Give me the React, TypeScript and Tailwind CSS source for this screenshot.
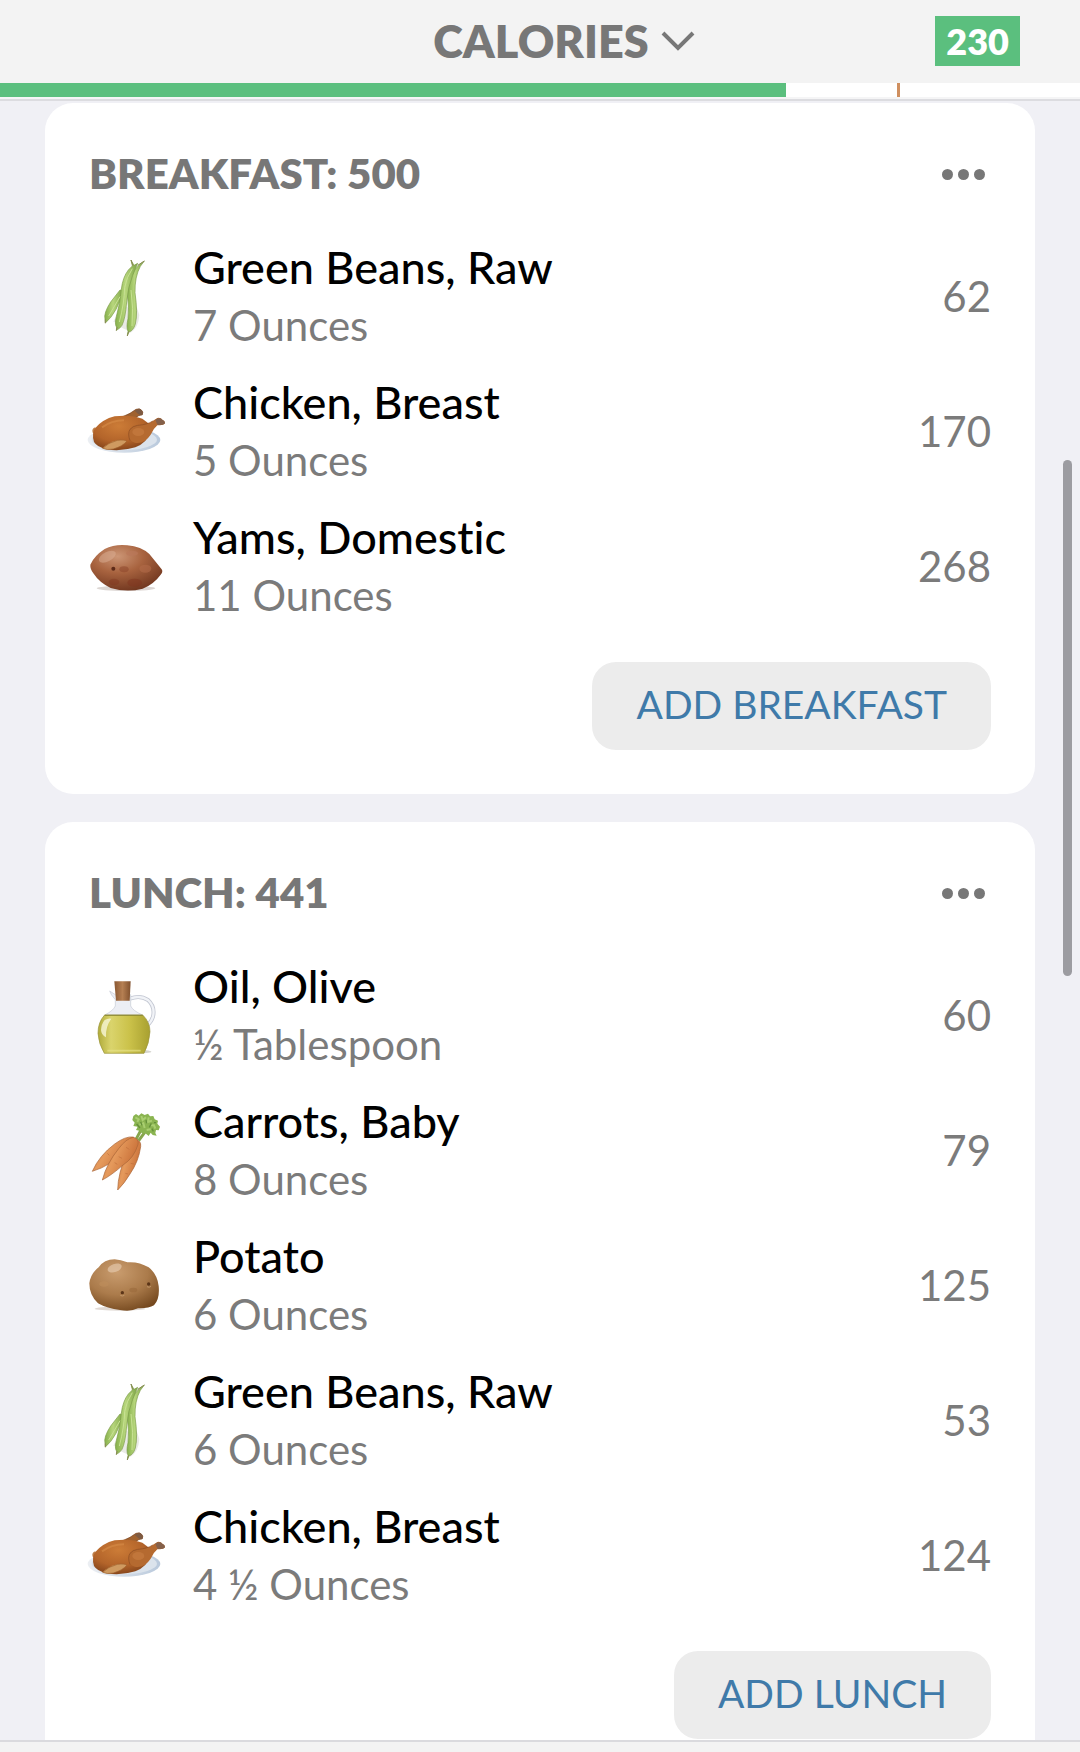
type Food = {
  name: string;
  amount: string;
  calories: number;
  icon: () => React.ReactNode;
};

function GreenBeans() {
  return (
    <svg viewBox="45 51 240 240" className="size-full" aria-hidden="true">
      <defs>
        <linearGradient id="bean" x1="0" x2="1">
          <stop offset="0" stopColor="#86b04c" />
          <stop offset="0.45" stopColor="#b7d67c" />
          <stop offset="1" stopColor="#7da545" />
        </linearGradient>
      </defs>
      <path d="M130 246 Q142 244 152 262 Q172 270 182 278 Q206 262 208 225 L200 200 L150 200 Z" fill="#e9eae6" />
      <path d="M106 249 L105 238 Q100 220 122 186 L150 150 L160 152 Q152 182 138 208 Q124 234 106 249 Z" fill="url(#bean)" stroke="#7b9c48" strokeWidth="2" />
      <path d="M172 286 L174 274 Q168 262 174 236 Q178 205 172 164 Q168 120 190 94 L208 74 L223 63 L211 79 Q194 110 195 158 Q204 220 196 252 Q190 272 177 276 Z" fill="url(#bean)" stroke="#7b9c48" strokeWidth="2" />
      <path d="M139 271 L140 262 Q133 252 139 230 Q150 192 154 148 Q158 112 175 90 L187 78 L183 60 L192 76 L203 70 Q196 88 188 106 Q174 140 170 186 Q166 236 156 256 Q150 266 139 271 Z" fill="url(#bean)" stroke="#7b9c48" strokeWidth="2" />
      <path d="M148 246 Q163 190 164 142 Q170 110 187 86 M186 258 Q191 205 183 150 M116 228 Q134 198 150 170" fill="none" stroke="#c8e193" strokeWidth="3" />
      <path d="M183 60 L189 77 M223 63 L203 76 M106 238 L106 250 M141 261 L139 272 M176 274 L172 288" fill="none" stroke="#8a8a55" strokeWidth="3" />
    </svg>
  );
}

function Chicken() {
  return (
    <svg viewBox="45 36 240 240" className="size-full" aria-hidden="true">
      <defs>
        <linearGradient id="plate" x1="0" x2="1">
          <stop offset="0" stopColor="#eceff3" />
          <stop offset="1" stopColor="#b9c9dc" />
        </linearGradient>
        <radialGradient id="roast" cx="0.45" cy="0.3" r="0.75">
          <stop offset="0" stopColor="#cc7c37" />
          <stop offset="0.6" stopColor="#b3642a" />
          <stop offset="1" stopColor="#7e4019" />
        </radialGradient>
      </defs>
      <ellipse cx="162" cy="180" rx="109" ry="38" fill="url(#plate)" />
      <ellipse cx="163" cy="179" rx="98" ry="31" fill="#dbe3ec" />
      <path d="M158 110 Q182 101 198 88 Q210 84 214 90 Q221 96 217 104 L206 107 Q194 112 188 124 Z" fill="#a0622f" stroke="#7a4420" strokeWidth="2" />
      <path d="M194 92 Q208 83 214 90 Q222 98 216 106 Q206 106 202 100 Z" fill="#7d5a42" />
      <path d="M76 142 Q64 146 68 158 L78 162 Z" fill="#bf804a" />
      <path d="M72 186 Q64 160 76 144 Q98 118 134 109 Q182 103 217 116 L237 131 L240 156 Q232 188 196 202 Q150 216 110 208 Q82 202 72 186 Z" fill="url(#roast)" />
      <path d="M176 172 Q172 142 203 136 Q233 134 248 123 L262 114 Q272 112 277 119 Q287 123 284 131 Q278 136 262 136 Q250 146 242 164 Q222 194 194 188 Q180 184 176 172 Z" fill="#b56a30" />
      <path d="M180 182 Q172 160 180 148 Q188 138 203 136 Q233 134 248 123" fill="none" stroke="#8b4b21" strokeWidth="2" />
      <path d="M256 119 Q270 111 277 119 Q287 123 284 131 Q276 137 262 134 Z" fill="#84604a" />
      <ellipse cx="205" cy="156" rx="18" ry="12" fill="#c67c40" opacity="0.7" />
      <path d="M98 205 Q114 188 142 181 Q164 178 170 184 Q160 198 130 207 Q110 211 98 205 Z" fill="#cf9a60" stroke="#a0642f" strokeWidth="2" />
      <path d="M96 142 Q124 122 162 121" stroke="#dc924b" strokeWidth="6" fill="none" opacity="0.5" />
    </svg>
  );
}

function Yam() {
  return (
    <svg viewBox="45 441 240 240" className="size-full" aria-hidden="true">
      <defs>
        <radialGradient id="yam" cx="0.38" cy="0.25" r="0.8">
          <stop offset="0" stopColor="#cc9676" />
          <stop offset="0.45" stopColor="#a8633f" />
          <stop offset="1" stopColor="#6f351e" />
        </radialGradient>
      </defs>
      <ellipse cx="168" cy="625" rx="88" ry="8" fill="#dcd6d3" />
      <path d="M61 554 Q72 528 104 507 Q134 492 172 496 Q214 500 238 522 Q256 544 275 568 Q280 576 272 584 Q252 612 218 626 Q170 638 122 624 Q88 608 70 580 Q60 566 61 554 Z" fill="url(#yam)" />
      <ellipse cx="112" cy="530" rx="28" ry="14" fill="#dcb096" opacity="0.5" transform="rotate(-28 112 530)" />
      <circle cx="130" cy="566" r="6" fill="#5d2a18" />
      <ellipse cx="162" cy="568" rx="14" ry="9" fill="#8a4228" opacity="0.5" />
      <ellipse cx="194" cy="608" rx="22" ry="12" fill="#80341e" opacity="0.5" />
      <ellipse cx="132" cy="606" rx="16" ry="10" fill="#80341e" opacity="0.4" />
      <ellipse cx="186" cy="520" rx="18" ry="8" fill="#b9775a" opacity="0.7" />
      <ellipse cx="226" cy="566" rx="18" ry="12" fill="#b26a49" opacity="0.6" />
    </svg>
  );
}

function OliveOil() {
  return (
    <svg viewBox="45 48 240 240" className="size-full" aria-hidden="true">
      <defs>
        <linearGradient id="oil" x1="0" x2="1">
          <stop offset="0" stopColor="#b0ab3a" />
          <stop offset="0.25" stopColor="#dad46c" />
          <stop offset="0.6" stopColor="#cbc24a" />
          <stop offset="1" stopColor="#a8a030" />
        </linearGradient>
        <linearGradient id="cork" x1="0" x2="1">
          <stop offset="0" stopColor="#8a5833" />
          <stop offset="0.5" stopColor="#b57f52" />
          <stop offset="1" stopColor="#80502d" />
        </linearGradient>
      </defs>
      <ellipse cx="190" cy="275" rx="54" ry="6" fill="#d5d5ce" />
      <path d="M180 116 Q210 104 234 120 Q256 140 249 170 Q244 186 233 194" fill="none" stroke="#c3c7d2" strokeWidth="12" />
      <path d="M180 116 Q210 104 234 120 Q256 140 249 170 Q244 186 233 194" fill="none" stroke="#f1f3f7" strokeWidth="7" />
      <path d="M136 104 L119 93 Q122 104 136 119 L136 138 Q130 152 104 165 L218 165 Q188 152 182 138 L182 104 Z" fill="#eceef4" stroke="#c6cad4" strokeWidth="2" />
      <path d="M133 64 L182 64 L179 122 L138 122 Z" fill="url(#cork)" />
      <path d="M104 165 L218 165 Q240 186 240 215 Q238 250 222 280 L103 280 Q86 252 84 220 Q84 186 104 165 Z" fill="url(#oil)" stroke="#989338" strokeWidth="2" />
      <path d="M104 166 L218 166" stroke="#8d8a35" strokeWidth="3" />
      <path d="M104 180 Q114 174 124 176 Q106 200 108 232 Q94 226 93 210 Q94 192 104 180 Z" fill="#f4f3cf" opacity="0.85" />
      <path d="M112 272 L212 272" stroke="#e6e287" strokeWidth="5" opacity="0.7" />
    </svg>
  );
}

function Carrots() {
  return (
    <svg viewBox="45 453 240 240" className="size-full" aria-hidden="true">
      <defs>
        <linearGradient id="carrot" x1="0" x2="1" y2="0.5">
          <stop offset="0" stopColor="#cb7640" />
          <stop offset="0.45" stopColor="#e59a5c" />
          <stop offset="1" stopColor="#c56a33" />
        </linearGradient>
      </defs>
      <path d="M198 538 L214 508 M206 542 L228 512" stroke="#86a64c" strokeWidth="9" fill="none" />
      <path
        d="M190 468 L198 462 L206 467 L214 460 L224 465 L234 461 L240 469 L250 468 L254 478 L264 482 L262 491 L270 500 L266 511 L258 510 L256 519 L260 527 L248 525 L242 518 L236 528 L226 520 L216 520 L208 512 L198 510 L203 500 L190 498 L194 488 L187 480 Z"
        fill="#8ab450"
      />
      <path
        d="M196 472 L206 478 L202 486 M214 468 L218 480 L228 472 M236 472 L234 486 L246 482 M208 494 L220 490 L224 504 M240 496 L252 496 L256 506 M230 510 L242 508"
        fill="none"
        stroke="#a9ce70"
        strokeWidth="6"
      />
      <path d="M212 486 L216 496 M228 480 L230 490 M200 492 L210 504 M244 490 L238 502 M250 514 L246 506 M258 488 L252 488" fill="none" stroke="#64903a" strokeWidth="4" />
      <path d="M67 634 Q88 586 134 552 Q166 528 190 531 L196 548 Q160 590 120 610 Q94 626 67 634 Z" fill="url(#carrot)" stroke="#a86337" strokeWidth="2" />
      <path d="M143 690 Q144 640 170 580 Q180 550 197 540 Q214 540 212 560 Q206 604 180 642 Q162 672 143 690 Z" fill="url(#carrot)" stroke="#a86337" strokeWidth="2" />
      <path d="M97 660 Q110 610 146 566 Q168 536 190 532 Q208 536 204 554 Q192 594 158 616 Q124 646 97 660 Z" fill="url(#carrot)" stroke="#a86337" strokeWidth="2" />
      <path d="M146 590 L156 595 M134 608 L142 613 M168 562 L178 568 M112 580 L118 586 M182 610 L192 612 M166 640 L174 642" stroke="#c0703c" strokeWidth="2" />
    </svg>
  );
}

function Potato() {
  return (
    <svg viewBox="45 48 240 240" className="size-full" aria-hidden="true">
      <defs>
        <radialGradient id="potato" cx="0.4" cy="0.25" r="0.8">
          <stop offset="0" stopColor="#c99c6e" />
          <stop offset="0.55" stopColor="#ab7b4b" />
          <stop offset="1" stopColor="#75491f" />
        </radialGradient>
      </defs>
      <ellipse cx="150" cy="236" rx="76" ry="6" fill="#e0d9d4" />
      <path d="M58 160 Q62 130 86 112 Q102 88 134 88 Q152 90 172 97 Q206 94 236 112 Q262 132 266 168 Q270 206 252 226 Q236 236 204 235 Q182 246 150 240 Q112 236 84 220 Q58 196 58 160 Z" fill="url(#potato)" />
      <ellipse cx="134" cy="114" rx="22" ry="12" fill="#ecd6bd" opacity="0.55" transform="rotate(-20 134 114)" />
      <circle cx="157" cy="188" r="5" fill="#5b3518" />
      <circle cx="236" cy="162" r="5" fill="#5b3518" />
      <path d="M151 196 Q157 200 163 196 M231 170 Q238 174 243 169" stroke="#cfa77c" strokeWidth="2" fill="none" />
      <ellipse cx="102" cy="162" rx="14" ry="8" fill="#be8d5c" opacity="0.6" />
      <ellipse cx="190" cy="180" rx="12" ry="7" fill="#966638" opacity="0.5" />
    </svg>
  );
}

const meals: { title: string; foods: Food[] }[] = [
  {
    title: "Breakfast",
    foods: [
      { name: "Green Beans, Raw", amount: "7 Ounces", calories: 62, icon: GreenBeans },
      { name: "Chicken, Breast", amount: "5 Ounces", calories: 170, icon: Chicken },
      { name: "Yams, Domestic", amount: "11 Ounces", calories: 268, icon: Yam },
    ],
  },
  {
    title: "Lunch",
    foods: [
      { name: "Oil, Olive", amount: "½ Tablespoon", calories: 60, icon: OliveOil },
      { name: "Carrots, Baby", amount: "8 Ounces", calories: 79, icon: Carrots },
      { name: "Potato", amount: "6 Ounces", calories: 125, icon: Potato },
      { name: "Green Beans, Raw", amount: "6 Ounces", calories: 53, icon: GreenBeans },
      { name: "Chicken, Breast", amount: "4 ½ Ounces", calories: 124, icon: Chicken },
    ],
  },
];

function MealCard({ title, foods }: { title: string; foods: Food[] }) {
  const total = foods.reduce((sum, food) => sum + food.calories, 0);

  return (
    <section className="rounded-[28px] bg-white pr-11 pb-11 pl-10">
      <div className="flex h-[126px] items-start justify-between pt-[46px]">
        <h2 className="pl-1 text-[42px] leading-[48px] font-extrabold text-[#777] uppercase">
          {title}: {total}
        </h2>
        <button type="button" aria-label={`${title} options`} className="flex h-[50px] items-center gap-[5px] pr-[6px]">
          <span className="size-[11px] rounded-full bg-[#777]" />
          <span className="size-[11px] rounded-full bg-[#777]" />
          <span className="size-[11px] rounded-full bg-[#777]" />
        </button>
      </div>

      <ul>
        {foods.map((food) => (
          <li key={food.name} className="flex h-[135px] items-center gap-7">
            <div className="size-20 shrink-0">
              <food.icon />
            </div>
            <div className="flex-1">
              <p className="text-[45px] leading-[56px] font-medium text-black">{food.name}</p>
              <p className="text-[42px] leading-[60px] text-[#7b7b7b]">{food.amount}</p>
            </div>
            <span className="text-[42px] text-[#7b7b7b]">{food.calories}</span>
          </li>
        ))}
      </ul>

      <div className="mt-7 flex justify-end">
        <button type="button" className="h-[88px] rounded-3xl bg-[#ececec] px-11 pb-1 text-[39px] text-[#3f7aa9] uppercase">
          Add {title}
        </button>
      </div>
    </section>
  );
}

export default function App() {
  return (
    <div className="relative flex h-screen flex-col overflow-hidden bg-[#f0f0f5] font-['Lato',sans-serif] [font-variant-ligatures:none]">
      <header className="shrink-0 border-b-2 border-[#dcdce0] bg-[#f3f3f3]">
        <div className="grid h-[83px] grid-cols-[1fr_auto_1fr] items-center pr-[60px] pb-[2px] pl-[108px]">
          <button type="button" className="col-start-2 flex items-center gap-3 text-[45px] leading-[60px] font-extrabold text-[#777]">
            CALORIES
            <svg viewBox="0 0 34 20" className="h-5 w-[34px]" fill="none" stroke="currentColor" strokeWidth="4" aria-hidden="true">
              <path d="M2 2 L17 17 L32 2" />
            </svg>
          </button>
          <span className="justify-self-end bg-[#5bbf7e] px-[11px] text-[36px] leading-[50px] font-extrabold text-white">230</span>
        </div>
        <div className="relative h-[14px] bg-white">
          <div className="h-full w-[72.8%] bg-[#5bbf7e]" />
          <div className="absolute top-0 left-[83.1%] h-full w-[3px] bg-[#cf8f5f]" />
        </div>
        <div className="h-[2px] bg-[#f5f5f6]" />
      </header>

      <main className="flex min-h-0 flex-1 flex-col gap-7 overflow-hidden px-[45px] pt-[2px]">
        {meals.map((meal) => (
          <MealCard key={meal.title} {...meal} />
        ))}
      </main>

      <footer className="h-3 shrink-0 border-t-2 border-[#dadade] bg-[#f3f3f3]" />

      {/* Scroll indicator */}
      <div className="absolute top-[460px] right-2 h-[516px] w-[9px] rounded-full bg-[#9c9ca1]" />
    </div>
  );
}
